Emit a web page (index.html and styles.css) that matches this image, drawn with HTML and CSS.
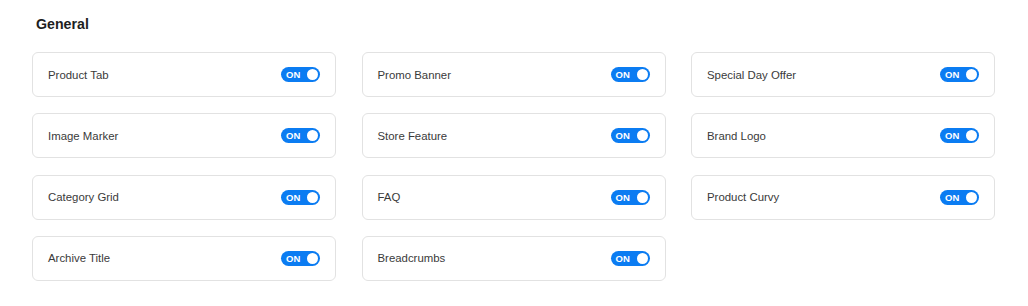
FILE: index.html
```html
<!DOCTYPE html>
<html lang="en">
<head>
    <meta charset="UTF-8">
    <title>General</title>
    <link rel="stylesheet" href="styles.css">
</head>
<body>
    <div class="panel">
        <h2>General</h2>

        <!-- Lista de widgets -->
        <div class="grid">
            <div class="card"><span>Product Tab</span><span class="toggle">ON</span></div>
            <div class="card"><span>Promo Banner</span><span class="toggle">ON</span></div>
            <div class="card"><span>Special Day Offer</span><span class="toggle">ON</span></div>
            <div class="card"><span>Image Marker</span><span class="toggle">ON</span></div>
            <div class="card"><span>Store Feature</span><span class="toggle">ON</span></div>
            <div class="card"><span>Brand Logo</span><span class="toggle">ON</span></div>
            <div class="card"><span>Category Grid</span><span class="toggle">ON</span></div>
            <div class="card"><span>FAQ</span><span class="toggle">ON</span></div>
            <div class="card"><span>Product Curvy</span><span class="toggle">ON</span></div>
            <div class="card"><span>Archive Title</span><span class="toggle">ON</span></div>
            <div class="card"><span>Breadcrumbs</span><span class="toggle">ON</span></div>
        </div>
    </div>
</body>
</html>
```

FILE: styles.css
```css
body {
    font-family: 'Liberation Sans', Arial, sans-serif;
    background-color: #ffffff;
    margin: 0;
    color: #3a3a3a;
}

.panel {
    padding: 15px 32px 0 32px;
    width: 963px;
}

h2 {
    font-size: 14.2px;
    font-weight: 700;
    color: #1e1e1e;
    margin: 0 0 19px 4px;
    line-height: 18px;
}

.grid {
    display: grid;
    grid-template-columns: repeat(3, 1fr);
    column-gap: 25.5px;
    row-gap: 16.3px;
}

.card {
    height: 45px;
    box-sizing: border-box;
    border: 1px solid #e2e2e2;
    border-radius: 6px;
    padding: 0 15px 0 15px;
    display: flex;
    justify-content: space-between;
    align-items: center;
    font-size: 11.4px;
}

.toggle {
    position: relative;
    width: 39px;
    height: 15px;
    border-radius: 8px;
    background-color: #0b7cf2;
    color: #ffffff;
    font-size: 9.5px;
    font-weight: 700;
    line-height: 15px;
    padding-left: 5px;
    box-sizing: border-box;
}

/* bolinha do interruptor */
.toggle::after {
    content: '';
    position: absolute;
    top: 2px;
    right: 2px;
    width: 11px;
    height: 11px;
    border-radius: 50%;
    background-color: #ffffff;
}
```
